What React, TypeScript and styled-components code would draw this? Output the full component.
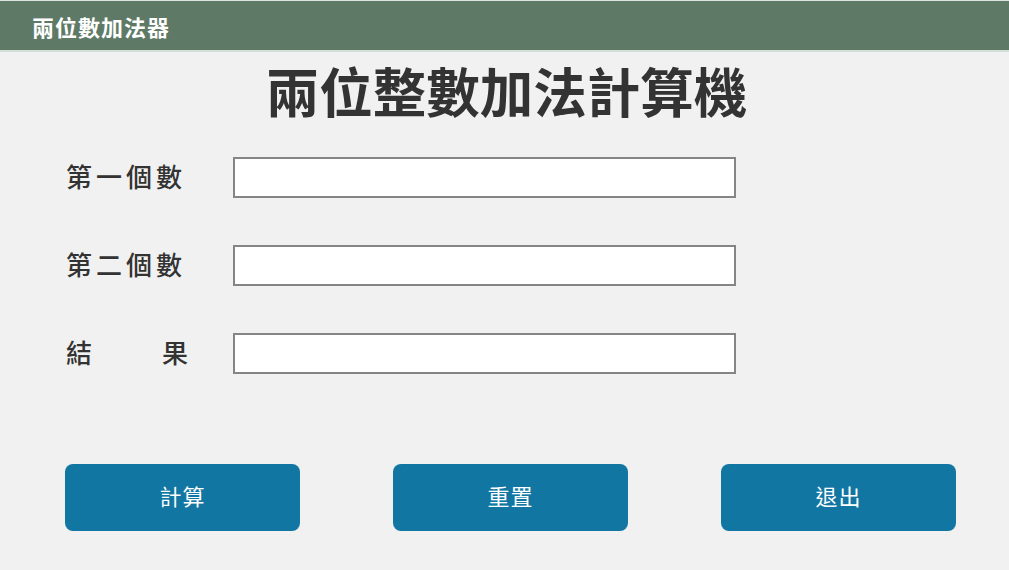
import React from 'react';
import styled, {createGlobalStyle} from "styled-components";

const GlobalStyle = createGlobalStyle`
  html, body {
    margin: 0;
    padding: 0;
    background: #F1F1F1;
    font-family: "Noto Sans CJK TC", "Noto Sans", sans-serif;
  }
`

const WindowSC = styled('div')`
  width: 1009px;
  height: 570px;
  background: #F1F1F1;
  display: flex;
  flex-direction: column;
  overflow: hidden;
`

const TitleBarSC = styled('header')`
  height: 49px;
  border-top: 1px solid #dde6e0;
  border-bottom: 2px solid #d3e2d9;
  background: #5E7A67;
  color: #ffffff;
  display: flex;
  align-items: center;
  padding-left: 32px;
  font-size: 22px;
  font-weight: 700;
  letter-spacing: 1px;
`

const HeadingSC = styled('h1')`
  margin: 8px 0 0;
  text-align: center;
  font-size: 53.5px;
  line-height: 60px;
  font-weight: 700;
  color: #333333;
  padding-left: 4px;
`

const FormSC = styled('div')`
  display: grid;
  grid-template-columns: 167px 503px;
  row-gap: 47px;
  align-items: center;
  padding-left: 66px;
  margin-top: 37px;
`

const LabelSC = styled('label')<{ $spread?: number }>`
  font-size: 26px;
  font-weight: 500;
  color: #333333;
  letter-spacing: ${p => p.$spread ?? 4}px;
  white-space: pre;
  margin-top: -5px;
`

const FieldSC = styled('input')`
  box-sizing: border-box;
  width: 503px;
  height: 41px;
  border: 2px solid #858585;
  background: #ffffff;
  outline: none;
  font-size: 20px;
  padding: 0 8px;
`

const ActionsSC = styled('div')`
  display: flex;
  justify-content: space-between;
  padding: 0 53px 0 65px;
  margin-top: 90px;
`

const ButtonSC = styled('button')`
  width: 235px;
  height: 67px;
  padding: 0 0 6px;
  border: none;
  border-radius: 8px;
  background: #1276A3;
  color: #ffffff;
  font-family: inherit;
  font-size: 22px;
  letter-spacing: 1px;
  cursor: pointer;
`

const fields = [
    {label: '第一個數'},
    {label: '第二個數'},
    {label: '結　　果', spread: 6}
];
const actions = ['計算', '重置', '退出'];

export default function App() {
    return (
        <WindowSC>
            <GlobalStyle/>
            <TitleBarSC>兩位數加法器</TitleBarSC>
            <HeadingSC>兩位整數加法計算機</HeadingSC>
            <FormSC>
                {fields.map(f => (
                    <React.Fragment key={f.label}>
                        <LabelSC $spread={f.spread}>{f.label}</LabelSC>
                        <FieldSC type="text"/>
                    </React.Fragment>
                ))}
            </FormSC>
            <ActionsSC>
                {actions.map(text => (
                    <ButtonSC key={text}>{text}</ButtonSC>
                ))}
            </ActionsSC>
        </WindowSC>
    );
}
